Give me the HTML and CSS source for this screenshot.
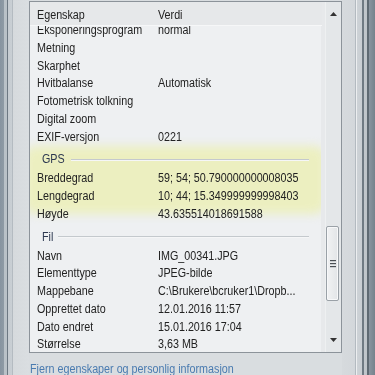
FILE: index.html
```html
<!DOCTYPE html>
<html lang="no">
<head>
<meta charset="utf-8">
<title>Egenskaper</title>
<link rel="stylesheet" href="styles.css">
</head>
<body>
<div class="frame">
  <div class="edge-left"></div>
  <div class="center">
    <div class="listbox">
      <div class="pane">
        <div class="header">
          <span class="col-name"><span class="t">Egenskap</span></span>
          <span class="col-val"><span class="t">Verdi</span></span>
        </div>
        <div class="viewport">
          <div class="highlight"></div>
          <div class="rows">
            <div class="row"><span class="col-name"><span class="t">Eksponeringsprogram</span></span><span class="col-val"><span class="t">normal</span></span></div>
            <div class="row"><span class="col-name"><span class="t">Metning</span></span><span class="col-val"></span></div>
            <div class="row"><span class="col-name"><span class="t">Skarphet</span></span><span class="col-val"></span></div>
            <div class="row"><span class="col-name"><span class="t">Hvitbalanse</span></span><span class="col-val"><span class="t">Automatisk</span></span></div>
            <div class="row"><span class="col-name"><span class="t">Fotometrisk tolkning</span></span><span class="col-val"></span></div>
            <div class="row"><span class="col-name"><span class="t">Digital zoom</span></span><span class="col-val"></span></div>
            <div class="row"><span class="col-name"><span class="t">EXIF-versjon</span></span><span class="col-val"><span class="t">0221</span></span></div>
            <div class="group"><span class="t">GPS</span><span class="rule"></span></div>
            <div class="row"><span class="col-name"><span class="t">Breddegrad</span></span><span class="col-val"><span class="t">59; 54; 50.790000000008035</span></span></div>
            <div class="row"><span class="col-name"><span class="t">Lengdegrad</span></span><span class="col-val"><span class="t">10; 44; 15.349999999998403</span></span></div>
            <div class="row"><span class="col-name"><span class="t">Høyde</span></span><span class="col-val"><span class="t">43.635514018691588</span></span></div>
            <div class="group"><span class="t">Fil</span><span class="rule"></span></div>
            <div class="row"><span class="col-name"><span class="t">Navn</span></span><span class="col-val"><span class="t">IMG_00341.JPG</span></span></div>
            <div class="row"><span class="col-name"><span class="t">Elementtype</span></span><span class="col-val"><span class="t">JPEG-bilde</span></span></div>
            <div class="row"><span class="col-name"><span class="t">Mappebane</span></span><span class="col-val"><span class="t">C:\Brukere\bcruker1\Dropb...</span></span></div>
            <div class="row"><span class="col-name"><span class="t">Opprettet dato</span></span><span class="col-val"><span class="t">12.01.2016 11:57</span></span></div>
            <div class="row"><span class="col-name"><span class="t">Dato endret</span></span><span class="col-val"><span class="t">15.01.2016 17:04</span></span></div>
            <div class="row"><span class="col-name"><span class="t">Størrelse</span></span><span class="col-val"><span class="t">3,63 MB</span></span></div>
          </div>
        </div>
      </div>
      <div class="scrollbar">
        <div class="sb-btn sb-up">
          <svg width="7" height="4" viewBox="0 0 7 4"><path d="M0 4 L3.5 0 L7 4 Z" fill="#333"/></svg>
        </div>
        <div class="sb-track">
          <div class="thumb">
            <span class="grip"></span><span class="grip"></span><span class="grip"></span>
          </div>
        </div>
        <div class="sb-btn sb-down">
          <svg width="7" height="4" viewBox="0 0 7 4"><path d="M0 0 L7 0 L3.5 4 Z" fill="#333"/></svg>
        </div>
      </div>
    </div>
    <a class="link" href="#"><span class="t">Fjern egenskaper og personlig informasjon</span></a>
  </div>
  <div class="edge-right"></div>
</div>
</body>
</html>
```

FILE: styles.css
```css
* { box-sizing: border-box; }

html, body {
  margin: 0;
  padding: 0;
  width: 375px;
  height: 375px;
  overflow: hidden;
  background: #d8dce0;
  font-family: "Liberation Sans", Arial, sans-serif;
  font-size: 12.5px;
  color: #222222;
}

.frame {
  display: flex;
  width: 375px;
  height: 375px;
}

.edge-left {
  width: 29px;
  flex: none;
  background: linear-gradient(to right,
    #8794a0 0, #8e9aa4 4px,
    #b9c1c7 4px, #b9c1c7 7px,
    #6d7882 7px, #6d7882 8.5px,
    #c6ccd1 8.5px, #c9cfd4 12px,
    #b4bbc1 12px, #b4bbc1 13px,
    #d6dadd 13px, #dadee1 29px);
}

.center {
  width: 313px;
  flex: none;
  display: flex;
  flex-direction: column;
  background: #d9dde0;
}

.edge-right {
  flex: 1;
  background: linear-gradient(to right,
    #d6dadd 0, #d3d7db 13px,
    #b3bac0 13px, #b3bac0 14px,
    #eceef0 14px, #eceef0 15px,
    #cdd2d6 15px, #c9ced3 20px,
    #6f7a83 20px, #6f7a83 21.5px,
    #c2c8cd 21.5px, #bec4c9 25px,
    #5f6a73 25px, #5f6a73 27px,
    #8a95a0 27px, #76828c 33px);
}

.listbox {
  margin-top: 1px;
  height: 352px;
  display: flex;
  border: 1px solid #8c939a;
  background: #e7e9eb;
}

.pane {
  flex: 1;
  display: flex;
  flex-direction: column;
  min-width: 0;
}

.t {
  display: inline-block;
  white-space: nowrap;
  transform: scaleX(0.86);
  transform-origin: 0 50%;
}

.header {
  display: flex;
  height: 24px;
  padding: 5px 0 0 7px;
  line-height: 17px;
  background: #e6e8ea;
  border-bottom: 1px solid #f6f7f8;
  margin-right: 3px;
}

.col-name {
  width: 121px;
  flex: none;
}

.col-val {
  flex: 1;
  white-space: nowrap;
}

.viewport {
  position: relative;
  flex: 1;
  overflow: hidden;
  background: #eef0f2;
  margin-right: 4px;
}

.highlight {
  position: absolute;
  left: -6px;
  top: 120px;
  width: 302px;
  height: 68px;
  border-radius: 12px;
  background: #ecefc0;
  filter: blur(5px);
}

.rows {
  position: relative;
  margin-top: -4px;
}

.row {
  display: flex;
  height: 17.75px;
  line-height: 17.75px;
  padding-left: 7px;
}

.group {
  display: flex;
  align-items: center;
  height: 24px;
  padding: 5px 12px 3px 12px;
  line-height: 16px;
  color: #2c3850;
}

.rule {
  flex: 1;
  height: 1px;
  margin-left: 3px;
  background: #c4c9cd;
  box-shadow: 0 1px 0 #f5f6f7;
}

.scrollbar {
  width: 16px;
  flex: none;
  display: flex;
  flex-direction: column;
  background: #e4e7e9;
  border-left: 1px solid #eef0f1;
}

.sb-btn {
  display: flex;
  align-items: center;
  justify-content: center;
  padding-right: 1px;
}

.sb-up {
  height: 22px;
  padding-top: 1px;
}

.sb-down {
  height: 22px;
  padding-bottom: 2px;
}

.sb-track {
  flex: 1;
}

.thumb {
  margin: 202px 2px 0 0;
  height: 75px;
  border: 1px solid #9aa1a7;
  border-radius: 2px;
  background: linear-gradient(to right, #f1f2f3, #e2e5e7);
  box-shadow: inset 0 0 0 1px #f7f8f9;
  display: flex;
  flex-direction: column;
  align-items: center;
  justify-content: center;
  gap: 2px;
}

.grip {
  display: block;
  width: 6px;
  height: 1px;
  background: #4a4f54;
  box-shadow: 0 1px 0 #c9cdd0;
}

.link {
  display: block;
  margin-top: 8px;
  padding-left: 1px;
  line-height: 17px;
  color: #4a7bb0;
  text-decoration: none;
  white-space: nowrap;
}
```
